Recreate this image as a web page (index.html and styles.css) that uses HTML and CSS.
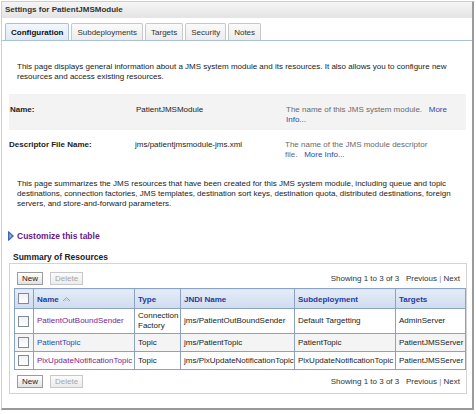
FILE: index.html
```html
<!DOCTYPE html>
<html>
<head>
<meta charset="utf-8">
<link rel="stylesheet" href="styles.css">
</head>
<body>
<div class="panel">
  <div class="title">Settings for PatientJMSModule</div>
  <div class="tabs">
    <div class="tab active">Configuration</div>
    <div class="tab">Subdeployments</div>
    <div class="tab">Targets</div>
    <div class="tab">Security</div>
    <div class="tab">Notes</div>
  </div>
  <div class="content">
    <p class="intro">This page displays general information about a JMS system module and its resources. It also allows you to configure new resources and access existing resources.</p>
    <div class="prop shaded">
      <div class="label">Name:</div>
      <div class="value">PatientJMSModule</div>
      <div class="help">The name of this JMS system module. &nbsp; <span class="link">More</span><br><span class="link">Info...</span></div>
    </div>
    <div class="prop">
      <div class="label">Descriptor File Name:</div>
      <div class="value">jms/patientjmsmodule-jms.xml</div>
      <div class="help">The name of the JMS module descriptor<br>file. &nbsp;&nbsp;<span class="link">More Info...</span></div>
    </div>
    <p class="summary-text">This page summarizes the JMS resources that have been created for this JMS system module, including queue and topic destinations, connection factories, JMS templates, destination sort keys, destination quota, distributed destinations, foreign servers, and store-and-forward parameters.</p>
    <div class="customize">
      <svg class="tri" width="6" height="10" viewBox="0 0 6 10"><path d="M0.5 0.5 L5.5 5 L0.5 9.5 Z" fill="#4a73c4" stroke="#2a4f9c" stroke-width="0.8"/><path d="M1.5 2.5 L3.5 5 L1.5 7.5 Z" fill="#9fbcec"/></svg>
      <span>Customize this table</span>
    </div>
    <div class="section-title">Summary of Resources</div>
    <div class="box">
      <div class="toolbar">
        <div class="btns"><span class="btn">New</span><span class="btn disabled">Delete</span></div>
        <div class="pager">Showing 1 to 3 of 3 &nbsp;&nbsp;Previous <span class="sep">|</span> Next</div>
      </div>
      <table class="grid">
        <colgroup>
          <col class="c-chk"><col class="c-name"><col class="c-type"><col class="c-jndi"><col class="c-sub"><col class="c-tgt">
        </colgroup>
        <thead>
          <tr>
            <th class="chk"><span class="cb"></span></th>
            <th>Name <svg class="sort" width="9" height="6" viewBox="0 0 9 6"><path d="M1 5 L4.5 1.5 L8 5" fill="none" stroke="#8aa0c8" stroke-width="1"/><path d="M2.5 5.5 L4.5 3.5 L6.5 5.5" fill="none" stroke="#b8c6e0" stroke-width="1"/></svg></th>
            <th>Type</th>
            <th>JNDI Name</th>
            <th>Subdeployment</th>
            <th>Targets</th>
          </tr>
        </thead>
        <tbody>
          <tr class="first">
            <td class="chk"><span class="cb"></span></td>
            <td><span class="visited">PatientOutBoundSender</span></td>
            <td class="wrap">Connection Factory</td>
            <td>jms/PatientOutBoundSender</td>
            <td>Default Targetting</td>
            <td>AdminServer</td>
          </tr>
          <tr class="alt">
            <td class="chk"><span class="cb"></span></td>
            <td><span class="link">PatientTopic</span></td>
            <td>Topic</td>
            <td>jms/PatientTopic</td>
            <td>PatientTopic</td>
            <td>PatientJMSServer</td>
          </tr>
          <tr>
            <td class="chk"><span class="cb"></span></td>
            <td><span class="visited">PixUpdateNotificationTopic</span></td>
            <td>Topic</td>
            <td>jms/PixUpdateNotificationTopic</td>
            <td>PixUpdateNotificationTopic</td>
            <td>PatientJMSServer</td>
          </tr>
        </tbody>
      </table>
      <div class="toolbar bottom">
        <div class="btns"><span class="btn">New</span><span class="btn disabled">Delete</span></div>
        <div class="pager">Showing 1 to 3 of 3 &nbsp;&nbsp;Previous <span class="sep">|</span> Next</div>
      </div>
    </div>
  </div>
</div>
</body>
</html>
```

FILE: styles.css
```css
* { box-sizing: border-box; }
html, body { margin: 0; padding: 0; background: #ffffff; }
body {
  font-family: "Liberation Sans", Arial, sans-serif;
  font-size: 8px;
  line-height: 10px;
  color: #222222;
}
.panel {
  margin: 1px 0 0 1px;
  width: 473px;
  height: 409px;
  border: 1px solid #cfcfcf;
  border-right: 2px solid #9a9a9a;
  border-bottom: 2px solid #9a9a9a;
  background: #ffffff;
}
.title {
  height: 16px;
  padding: 3px 0 0 3px;
  font-weight: bold;
  color: #333;
  background: linear-gradient(#f5f5f5, #e4e4e4);
}
.tabs {
  display: flex;
  gap: 2px;
  padding: 5px 0 0 3px;
  border-bottom: 1px solid #a8c0d8;
  height: 23px;
}
.tab {
  height: 17px;
  padding: 4px 5px 0;
  border: 1px solid #c8c8c8;
  border-bottom: none;
  border-radius: 2px 2px 0 0;
  background: linear-gradient(#fafafa, #ececec);
  color: #333;
}
.tab.active {
  font-weight: bold;
  background: linear-gradient(#f2f7fd, #dfe9f5);
  border-color: #a8c0d8;
  color: #111;
}
.content { padding: 0 6px 0 6px; }
.intro { margin: 21px 0 0 9px; padding-right: 8px; }
.prop {
  display: grid;
  grid-template-columns: 126px 150px 1fr;
  margin-top: 12px;
  padding: 11px 0 5px 1px;
}
.prop + .prop { margin-top: 0; padding-top: 10px; padding-bottom: 8px; }
.prop.shaded { background: #f3f3f3; margin-left: 1px; margin-right: 0; }
.label { font-weight: bold; }
.help { color: #6a6a6a; padding-right: 8px; }
.link { color: #2a4aa8; }
.visited { color: #7b1c8e; }
.summary-text { margin: 11px 0 0 9px; padding-right: 12px; }
.customize {
  display: flex;
  align-items: center;
  gap: 3px;
  margin: 22px 0 0 0;
  font-weight: bold;
  font-size: 8.5px;
  color: #6c1786;
}
.section-title {
  margin: 11px 0 0 5px;
  font-weight: bold;
  color: #222;
  font-size: 8.5px;
}
.box {
  margin: 1px 0 0 1px;
  width: 458px;
  height: 131px;
  border: 1px solid #d4d4d4;
  padding: 8px 0 0 4px;
}
.toolbar {
  display: flex;
  justify-content: space-between;
  align-items: center;
  height: 13px;
  padding: 0 5px 0 3px;
  width: 451px;
}
.toolbar.bottom { margin-top: 5px; }
.btns { display: flex; gap: 7px; }
.btn {
  display: inline-block;
  height: 13px;
  padding: 1px 4px 0;
  border: 1px solid #9c9c9c;
  background: linear-gradient(#ffffff, #e2e2e2);
  color: #222;
  font-size: 8px;
}
.btn.disabled { color: #a6a6a6; border-color: #c8c8c8; background: linear-gradient(#fbfbfb, #ececec); }
.pager { color: #333; }
.sep { color: #888; }
.grid {
  margin-top: 3px;
  width: 451px;
  table-layout: fixed;
  border-collapse: collapse;
  border: 1px solid #8aa2c4;
}
.c-chk { width: 19px; }
.c-name { width: 101px; }
.c-type { width: 46px; }
.c-jndi { width: 114px; }
.c-sub { width: 101px; }
.c-tgt { width: 70px; }
.grid th {
  height: 20px;
  text-align: left;
  font-weight: bold;
  color: #1e3a9a;
  background: linear-gradient(#e4ecf7, #cfdcef);
  border: 1px solid #8aa2c4;
  padding: 2px 3px 0;
  white-space: nowrap;
}
.grid td {
  border: 1px solid #8aa2c4;
  padding: 0 3px;
  vertical-align: middle;
  white-space: nowrap;
  overflow: hidden;
}
.grid tbody tr { height: 18px; }
.grid tbody tr.first { height: 25px; }
.grid td.wrap { white-space: normal; }
.grid tr.alt td { background: #f4f4f4; }
.grid .chk { padding: 0 0 0 3px; }
.cb {
  display: block;
  width: 11px;
  height: 11px;
  border: 1px solid #7e8a99;
  background: linear-gradient(#f0f0f0, #ffffff);
}
.sort { vertical-align: middle; margin-left: 1px; }
```
